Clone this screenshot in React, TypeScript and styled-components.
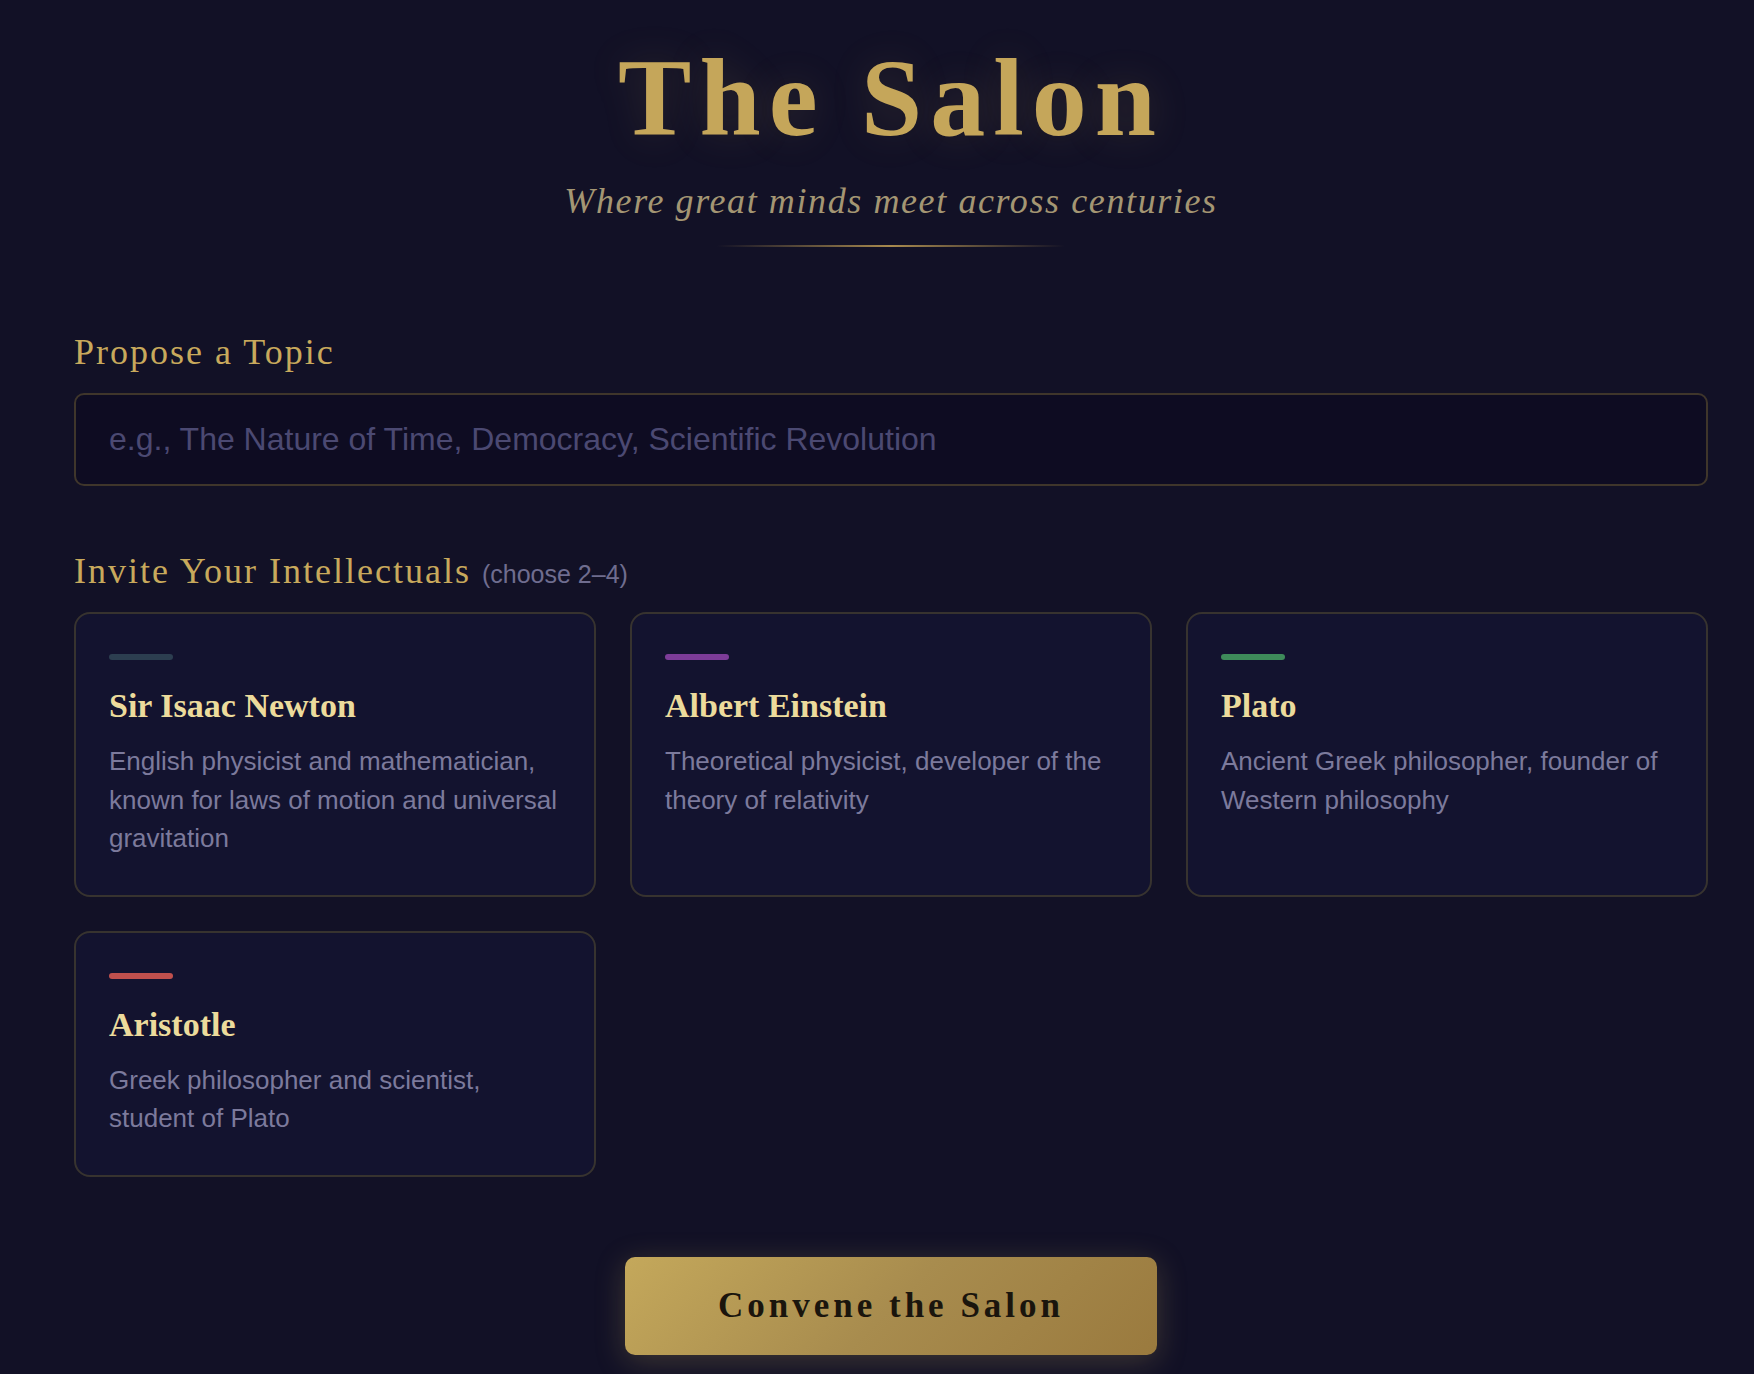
import React from 'react';
import styled, { createGlobalStyle } from 'styled-components';

interface Thinker {
  name: string;
  description: string;
  color: string;
}

const thinkers: Thinker[] = [
  {
    name: 'Sir Isaac Newton',
    description:
      'English physicist and mathematician, known for laws of motion and universal gravitation',
    color: '#2c3e50',
  },
  {
    name: 'Albert Einstein',
    description: 'Theoretical physicist, developer of the theory of relativity',
    color: '#7d3c98',
  },
  {
    name: 'Plato',
    description: 'Ancient Greek philosopher, founder of Western philosophy',
    color: '#3e8b5a',
  },
  {
    name: 'Aristotle',
    description: 'Greek philosopher and scientist, student of Plato',
    color: '#c0504d',
  },
];

const App: React.FC = () => {
  return (
    <>
      <GlobalStyle />
      <Page>
        <Header>
          <Title>The Salon</Title>
          <Subtitle>Where great minds meet across centuries</Subtitle>
          <Divider />
        </Header>

        <Section>
          <SectionLabel>Propose a Topic</SectionLabel>
          <TopicInput
            type="text"
            placeholder="e.g., The Nature of Time, Democracy, Scientific Revolution"
          />
        </Section>

        <Section>
          <SectionLabel>
            Invite Your Intellectuals <Hint>(choose 2–4)</Hint>
          </SectionLabel>
          <Grid>
            {thinkers.map((t) => (
              <Card key={t.name}>
                <AccentBar $color={t.color} />
                <Name>{t.name}</Name>
                <Description>{t.description}</Description>
              </Card>
            ))}
          </Grid>
        </Section>

        <Actions>
          <ConveneButton>Convene the Salon</ConveneButton>
        </Actions>
      </Page>
    </>
  );
};

export default App;

const GlobalStyle = createGlobalStyle`
  html, body {
    margin: 0;
    padding: 0;
    background: #121126;
  }
  body {
    font-family: "Liberation Sans", Arial, sans-serif;
    color: #ecdb9c;
  }
  * {
    box-sizing: border-box;
  }
`;

const Page = styled.div`
  min-height: 1374px;
  padding: 0 46px 40px 74px;
  background: #121126;
`;

const Header = styled.header`
  display: flex;
  flex-direction: column;
  align-items: center;
  padding-top: 33px;
`;

const Title = styled.h1`
  margin: 0;
  font-family: "Liberation Serif", "DejaVu Serif", serif;
  font-weight: 700;
  font-size: 110px;
  line-height: 130px;
  letter-spacing: 8px;
  color: #c5a65a;
  text-shadow: 0 0 40px rgba(197, 166, 90, 0.16);
`;

const Subtitle = styled.p`
  margin: 16px 0 0;
  font-family: "Liberation Serif", "DejaVu Serif", serif;
  font-style: italic;
  font-size: 36px;
  line-height: 44px;
  letter-spacing: 1.6px;
  color: #a49673;
`;

const Divider = styled.div`
  width: 348px;
  height: 2px;
  margin-top: 22px;
  background: linear-gradient(90deg, transparent, #a88a4e, transparent);
`;

const Section = styled.section`
  margin-top: 83px;

  & + & {
    margin-top: 63px;
  }
`;

const SectionLabel = styled.h2`
  margin: 0 0 19px;
  font-family: "Liberation Serif", "DejaVu Serif", serif;
  font-weight: 400;
  font-size: 36px;
  line-height: 44px;
  letter-spacing: 2px;
  color: #c8a95c;
`;

const Hint = styled.span`
  font-family: "Liberation Sans", Arial, sans-serif;
  font-size: 25px;
  line-height: 1;
  letter-spacing: 0;
  color: #6f6d8f;
`;

const TopicInput = styled.input`
  display: block;
  width: 100%;
  height: 93px;
  padding: 0 33px;
  border: 2px solid #3f362b;
  border-radius: 10px;
  background: #0e0c22;
  font-family: "Liberation Sans", Arial, sans-serif;
  font-size: 32px;
  color: #ecdb9c;
  outline: none;

  &::placeholder {
    color: #4b4972;
  }
`;

const Grid = styled.div`
  display: grid;
  grid-template-columns: repeat(3, 1fr);
  gap: 34px;
`;

const Card = styled.div`
  padding: 40px 33px 37px;
  border: 2px solid #37332f;
  border-radius: 16px;
  background: #13132f;
`;

const AccentBar = styled.div<{ $color: string }>`
  width: 64px;
  height: 6px;
  border-radius: 3px;
  background: ${(p) => p.$color};
`;

const Name = styled.h3`
  margin: 24px 0 0;
  font-family: "Liberation Serif", "DejaVu Serif", serif;
  font-weight: 700;
  font-size: 34px;
  line-height: 44px;
  color: #ecdb9c;
`;

const Description = styled.p`
  margin: 14px 0 0;
  font-family: "Liberation Sans", Arial, sans-serif;
  font-size: 26px;
  line-height: 38.6px;
  color: #7c7a9c;
`;

const Actions = styled.div`
  display: flex;
  justify-content: center;
  margin-top: 80px;
`;

const ConveneButton = styled.button`
  width: 532px;
  height: 98px;
  border: none;
  border-radius: 10px;
  background: linear-gradient(135deg, #c4a85b 0%, #a88c4e 50%, #9a7a3e 100%);
  box-shadow: 0 6px 30px rgba(197, 166, 90, 0.25);
  font-family: "Liberation Serif", "DejaVu Serif", serif;
  font-weight: 700;
  font-size: 35px;
  letter-spacing: 4px;
  color: #1a150d;
  cursor: pointer;
`;
